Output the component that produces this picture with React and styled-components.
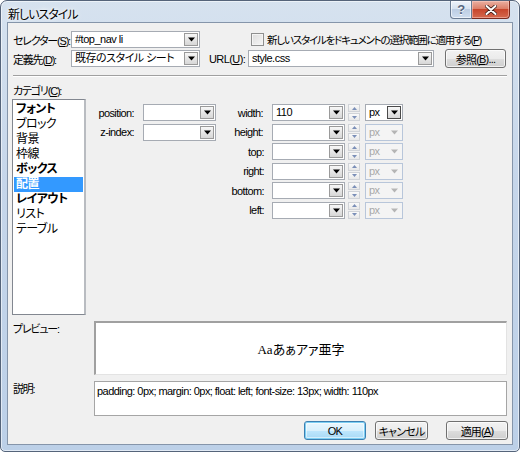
import React from "react";
import styled, { createGlobalStyle, css } from "styled-components";

const GlobalStyle = createGlobalStyle`
  html, body {
    margin: 0;
    padding: 0;
    background: #ffffff;
  }
  body {
    font-family: "Liberation Sans", "Noto Sans CJK JP", sans-serif;
    font-size: 11px;
    font-feature-settings: "palt";
    letter-spacing: -0.4px;
    color: #000;
  }
  * {
    box-sizing: border-box;
  }
`;

// Japanese labels are narrower in the original UI font
const jp = css`
  letter-spacing: -1.2px;
`;

const Arrow = ({ color = "#000" }) => (
  <svg width="7" height="5" viewBox="0 0 7 5">
    <path d="M0 0.5 H7 L3.5 4.5 Z" fill={color} />
  </svg>
);

const SpinArrow = ({ up }) => (
  <svg width="5" height="3" viewBox="0 0 5 3">
    <path d={up ? "M0 3 H5 L2.5 0 Z" : "M0 0 H5 L2.5 3 Z"} fill="#7b8fb8" />
  </svg>
);

const Combo = ({ w, value, disabled, dark }) => (
  <ComboBox $w={w} $disabled={disabled}>
    <ComboText $disabled={disabled}>{value}</ComboText>
    <DropBtn $disabled={disabled} $dark={dark}>
      <Arrow color={disabled ? "#b5b5b5" : "#000"} />
    </DropBtn>
  </ComboBox>
);

const Spin = () => (
  <SpinBox>
    <SpinHalf>
      <SpinArrow up />
    </SpinHalf>
    <SpinHalf>
      <SpinArrow />
    </SpinHalf>
  </SpinBox>
);

const categories = [
  { name: "フォント", bold: true },
  { name: "ブロック" },
  { name: "背景" },
  { name: "枠線" },
  { name: "ボックス", bold: true },
  { name: "配置", bold: true, selected: true },
  { name: "レイアウト", bold: true },
  { name: "リスト" },
  { name: "テーブル" },
];

const leftProps = ["position:", "z-index:"];
const rightProps = [
  { name: "width:", value: "110", unit: true },
  { name: "height:" },
  { name: "top:" },
  { name: "right:" },
  { name: "bottom:" },
  { name: "left:" },
];

export default function App() {
  return (
    <>
      <GlobalStyle />
      <Window>
        <TitleBar>
          <Title>新しいスタイル</Title>
          <Caption>
            <CaptionButton>?</CaptionButton>
            <CaptionButton $close>
              <svg width="12" height="10" viewBox="0 0 12 10">
                <path
                  d="M1.5 1 L10.5 9 M10.5 1 L1.5 9"
                  stroke="#3b1a14"
                  strokeWidth="3.6"
                  strokeLinecap="round"
                />
                <path
                  d="M1.5 1 L10.5 9 M10.5 1 L1.5 9"
                  stroke="#fff"
                  strokeWidth="2"
                  strokeLinecap="round"
                />
              </svg>
            </CaptionButton>
          </Caption>
        </TitleBar>

        <Client>
          <FormRow>
            <FieldLabel>
              セレクター(<u>S</u>):
            </FieldLabel>
            <Combo w={129} value="#top_nav li" />
            <CheckArea>
              <Checkbox />
              <span>
                新しいスタイルをドキュメントの選択範囲に適用する(<u>P</u>)
              </span>
            </CheckArea>
          </FormRow>
          <FormRow $gap>
            <FieldLabel>
              定義先(<u>D</u>):
            </FieldLabel>
            <Combo w={129} value="既存のスタイル シート" />
            <UrlLabel>
              URL(<u>U</u>):
            </UrlLabel>
            <Combo w={186} value="style.css" />
            <Button $w={61} $ml={11}>
              参照(<u>B</u>)...
            </Button>
          </FormRow>

          <Separator />

          <CategoryLabel>
            カテゴリ(<u>C</u>):
          </CategoryLabel>
          <Main>
            <ListBox>
              {categories.map((c) => (
                <ListItem key={c.name} $bold={c.bold} $selected={c.selected}>
                  {c.name}
                </ListItem>
              ))}
            </ListBox>
            <PropGrid>
              {rightProps.map((p, i) => (
                <React.Fragment key={p.name}>
                  {leftProps[i] && (
                    <>
                      <PropLabel>{leftProps[i]}</PropLabel>
                      <Combo w={73} />
                    </>
                  )}
                  <PropLabel $start={!leftProps[i]}>{p.name}</PropLabel>
                  <Combo w={73} value={p.value} />
                  <Spin />
                  <UnitCell>
                    <Combo w={38} value="px" disabled={!p.unit} dark={p.unit} />
                  </UnitCell>
                </React.Fragment>
              ))}
            </PropGrid>
          </Main>

          <BottomGrid>
            <SideLabel>プレビュー:</SideLabel>
            <PreviewBox>
              <PreviewText>
                <Latin>Aa</Latin>あぁアァ亜字
              </PreviewText>
            </PreviewBox>
            <SideLabel>説明:</SideLabel>
            <DescBox>
              padding: 0px; margin: 0px; float: left; font-size: 13px; width:
              110px
            </DescBox>
          </BottomGrid>

          <ButtonRow>
            <Button $w={62} $default>
              OK
            </Button>
            <Button $w={53} $ml={9}>
              キャンセル
            </Button>
            <Button $w={62} $ml={18}>
              適用(<u>A</u>)
            </Button>
          </ButtonRow>
        </Client>
      </Window>
    </>
  );
}

const Window = styled.div`
  width: 520px;
  height: 452px;
  border: 1px solid #55647a;
  border-radius: 7px 7px 5px 5px;
  background: linear-gradient(180deg, #d6e2ef 0%, #c6d6ea 40%, #bcd0e8 100%);
  box-shadow: inset 0 0 0 1px rgba(255, 255, 255, 0.55);
  display: flex;
  flex-direction: column;
`;

const TitleBar = styled.div`
  height: 21px;
  display: flex;
  align-items: flex-start;
  padding-left: 7px;
`;

const Title = styled.div`
  margin-top: 4px;
  font-size: 12px;
  letter-spacing: -1px;
  text-shadow: 0 0 6px #fff, 0 0 3px #fff;
`;

const Caption = styled.div`
  margin-left: auto;
  margin-right: 9px;
  display: flex;
`;

const CaptionButton = styled.div`
  width: 22px;
  height: 18px;
  display: flex;
  align-items: center;
  justify-content: center;
  border: 1px solid #6a7b92;
  border-top: none;
  border-radius: 0 0 0 4px;
  background: linear-gradient(180deg, #eef3fa 0%, #d6e2f0 45%, #bccde3 50%, #cfdef0 100%);
  color: #55667f;
  font-size: 13px;
  font-weight: bold;
  text-shadow: 0 1px 0 #fff;
  box-shadow: inset 0 0 0 1px rgba(255, 255, 255, 0.6);

  ${(p) =>
    p.$close &&
    css`
      width: 38px;
      border-left: none;
      border-color: #7a2a1e;
      border-radius: 0 0 4px 0;
      background: linear-gradient(180deg, #eab0a2 0%, #dc7f68 45%, #c8462c 50%, #d5694e 100%);
      box-shadow: inset 0 0 0 1px rgba(255, 210, 200, 0.5);
    `}
`;

const Client = styled.div`
  flex: 1;
  margin: 0 6px 6px 6px;
  border: 1px solid #8595aa;
  background: #f0f0f0;
  padding: 8px 4px 4px 5px;
  display: flex;
  flex-direction: column;
`;

const FormRow = styled.div`
  display: flex;
  align-items: center;
  height: 17px;
  margin-top: ${(p) => (p.$gap ? "2px" : "0")};
`;

const FieldLabel = styled.div`
  width: 58px;
  white-space: nowrap;
  ${jp}
`;

const UrlLabel = styled.div`
  width: 39px;
  margin-left: 9px;
  white-space: nowrap;
  letter-spacing: -0.6px;
`;

const ComboBox = styled.div`
  width: ${(p) => p.$w}px;
  height: 17px;
  flex-shrink: 0;
  display: flex;
  align-items: stretch;
  border: 1px solid ${(p) => (p.$disabled ? "#b8c6da" : "#a6abb3")};
  background: ${(p) => (p.$disabled ? "#f4f4f4" : "#fff")};
`;

const ComboText = styled.div`
  flex: 1;
  padding-left: 3px;
  line-height: 15px;
  white-space: nowrap;
  overflow: hidden;
  letter-spacing: -0.5px;
  color: ${(p) => (p.$disabled ? "#a8a8a8" : "#000")};
`;

const DropBtn = styled.div`
  width: 14px;
  margin: 1px;
  display: flex;
  align-items: center;
  justify-content: center;
  border: 1px solid ${(p) => (p.$disabled ? "transparent" : p.$dark ? "#4a4a4a" : "#9a9a9a")};
  background: ${(p) =>
    p.$disabled ? "transparent" : "linear-gradient(180deg, #f7f7f7 0%, #e6e6e6 50%, #d7d7d7 100%)"};
`;

const CheckArea = styled.div`
  display: flex;
  align-items: center;
  margin-left: 51px;
  white-space: nowrap;
  font-size: 10.5px;
  letter-spacing: -1.2px;
`;

const Checkbox = styled.div`
  width: 13px;
  height: 13px;
  margin-right: 3px;
  border: 1px solid #8e8f8f;
  background: linear-gradient(135deg, #dcdcdc 0%, #f6f6f6 100%);
  box-shadow: inset 0 0 0 1px #f4f4f4;
`;

const Button = styled.div`
  width: ${(p) => p.$w}px;
  height: 19px;
  margin: -1px 0 -1px ${(p) => p.$ml || 0}px;
  display: flex;
  align-items: center;
  justify-content: center;
  border: 1px solid #707070;
  border-radius: 3px;
  background: linear-gradient(180deg, #f2f2f2 0%, #ebebeb 50%, #dddddd 51%, #cfcfcf 100%);
  box-shadow: inset 0 0 0 1px rgba(255, 255, 255, 0.7);
  white-space: nowrap;
  letter-spacing: -0.8px;

  ${(p) =>
    p.$default &&
    css`
      border-color: #3c7fb1;
      box-shadow: inset 0 0 0 1px #7ecff3, inset 0 0 0 2px rgba(255, 255, 255, 0.5);
      background: linear-gradient(180deg, #eaf6fd 0%, #d9f0fc 50%, #bee6fd 51%, #a7d9f5 100%);
    `}
`;

const Separator = styled.div`
  margin: 8px 1px 0 0;
  border-top: 1px solid #a0a0a0;
  border-bottom: 1px solid #ffffff;
`;

const CategoryLabel = styled.div`
  margin-top: 7px;
  height: 14px;
  line-height: 14px;
  margin-bottom: 1px;
  ${jp}
`;

const Main = styled.div`
  display: flex;
  align-items: flex-start;
`;

const ListBox = styled.div`
  width: 74px;
  height: 216px;
  margin-left: -1px;
  padding: 2px 1px;
  background: #fff;
  border: 1px solid #828790;
  border-right: 2px solid #b9bcc1;
  flex-shrink: 0;
`;

const ListItem = styled.div`
  height: 15px;
  line-height: 15px;
  padding-left: 2px;
  font-size: 12px;
  letter-spacing: -0.6px;
  font-weight: ${(p) => (p.$bold ? "bold" : "normal")};
  background: ${(p) => (p.$selected ? "#3399ff" : "transparent")};
  color: ${(p) => (p.$selected ? "#fff" : "#000")};
`;

const PropGrid = styled.div`
  display: grid;
  grid-template-columns: 57px 73px 56px 73px 15px 43px;
  grid-auto-rows: 17px;
  row-gap: 2.5px;
  padding-top: 5px;
  align-items: center;
`;

const PropLabel = styled.div`
  text-align: right;
  padding-right: ${(p) => (p.$start ? 8 : 9)}px;
  white-space: nowrap;
  letter-spacing: -0.6px;
  ${(p) =>
    p.$start &&
    css`
      grid-column: 3;
    `}
`;

const SpinBox = styled.div`
  justify-self: end;
  width: 12px;
  height: 17px;
  display: flex;
  flex-direction: column;
  gap: 1px;
`;

const SpinHalf = styled.div`
  flex: 1;
  display: flex;
  align-items: center;
  justify-content: center;
  background: linear-gradient(180deg, #fafafa, #e8e8e8);
  border: 1px solid #d0d3d8;
`;

const UnitCell = styled.div`
  justify-self: end;
`;

const BottomGrid = styled.div`
  display: grid;
  grid-template-columns: 81px 413px;
  grid-template-rows: 54px 35px;
  row-gap: 6px;
  margin-top: 6px;
`;

const SideLabel = styled.div`
  padding-top: 1px;
  line-height: 14px;
  ${jp}
`;

const PreviewBox = styled.div`
  background: #fff;
  border-style: solid;
  border-width: 2px 1px 1px 2px;
  border-color: #a0a0a0 #e3e3e3 #e3e3e3 #a0a0a0;
  display: flex;
  align-items: center;
  justify-content: center;
`;

const PreviewText = styled.div`
  font-size: 13px;
  letter-spacing: 0;
  font-family: "Noto Sans CJK JP", sans-serif;
`;

const Latin = styled.span`
  font-family: "Liberation Serif", serif;
`;

const DescBox = styled.div`
  background: #fff;
  border: 1px solid #a5a5a5;
  padding: 2px 2px;
  line-height: 14px;
  letter-spacing: -0.55px;
  white-space: nowrap;
`;

const ButtonRow = styled.div`
  margin-top: auto;
  display: flex;
  justify-content: flex-end;
  align-items: center;
  height: 17px;
  margin-bottom: 1px;
`;
